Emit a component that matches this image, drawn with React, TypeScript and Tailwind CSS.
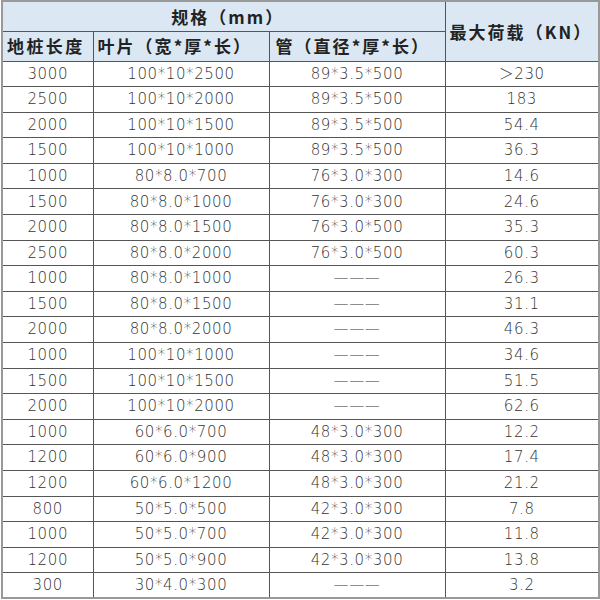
import React from 'react';

const rows: [string, string, string, string][] = [
  ['3000', '100*10*2500', '89*3.5*500', '＞230'],
  ['2500', '100*10*2000', '89*3.5*500', '183'],
  ['2000', '100*10*1500', '89*3.5*500', '54.4'],
  ['1500', '100*10*1000', '89*3.5*500', '36.3'],
  ['1000', '80*8.0*700', '76*3.0*300', '14.6'],
  ['1500', '80*8.0*1000', '76*3.0*300', '24.6'],
  ['2000', '80*8.0*1500', '76*3.0*500', '35.3'],
  ['2500', '80*8.0*2000', '76*3.0*500', '60.3'],
  ['1000', '80*8.0*1000', '———', '26.3'],
  ['1500', '80*8.0*1500', '———', '31.1'],
  ['2000', '80*8.0*2000', '———', '46.3'],
  ['1000', '100*10*1000', '———', '34.6'],
  ['1500', '100*10*1500', '———', '51.5'],
  ['2000', '100*10*2000', '———', '62.6'],
  ['1000', '60*6.0*700', '48*3.0*300', '12.2'],
  ['1200', '60*6.0*900', '48*3.0*300', '17.4'],
  ['1200', '60*6.0*1200', '48*3.0*300', '21.2'],
  ['800', '50*5.0*500', '42*3.0*300', '7.8'],
  ['1000', '50*5.0*700', '42*3.0*300', '11.8'],
  ['1200', '50*5.0*900', '42*3.0*300', '13.8'],
  ['300', '30*4.0*300', '———', '3.2'],
];

const head = "font-bold text-[#222] text-[17px] tracking-[0.12em] bg-[#dbe8f4] border border-[#555] [font-family:'Noto_Sans_CJK_SC',sans-serif]";
const cell = "border border-[#555] text-center text-[15px] font-extralight text-[#333] tracking-[0.04em] p-0 [font-family:'DejaVu_Sans','Noto_Sans_CJK_SC',sans-serif]";

export default function App() {
  return (
    <div className="w-[600px] h-[600px] bg-white overflow-hidden">
      <table className="ml-[1px] w-[597px] table-fixed border-collapse border-2 border-[#999]">
        <colgroup>
          <col className="w-[91px]" />
          <col className="w-[176px]" />
          <col className="w-[176px]" />
          <col className="w-[154px]" />
        </colgroup>
        <thead>
          <tr className="h-[30px]">
            <th colSpan={3} className={head + ' text-center pl-[8px]'}>规格（mm）</th>
            <th rowSpan={2} className={head + ' text-left pl-[4px] tracking-[0.08em]'}>最大荷载（KN）</th>
          </tr>
          <tr className="h-[30px]">
            <th className={head + ' text-left pl-[4px] tracking-[0.14em]'}>地桩长度</th>
            <th className={head + ' text-left pl-[4px]'}>叶片（宽*厚*长）</th>
            <th className={head + ' text-left pl-[6px]'}>管（直径*厚*长）</th>
          </tr>
        </thead>
        <tbody>
          {rows.map((r, i) => (
            <tr key={i} className="h-[25.6px]">
              {r.map((v, j) => (
                <td key={j} className={cell}>{v}</td>
              ))}
            </tr>
          ))}
        </tbody>
      </table>
    </div>
  );
}
